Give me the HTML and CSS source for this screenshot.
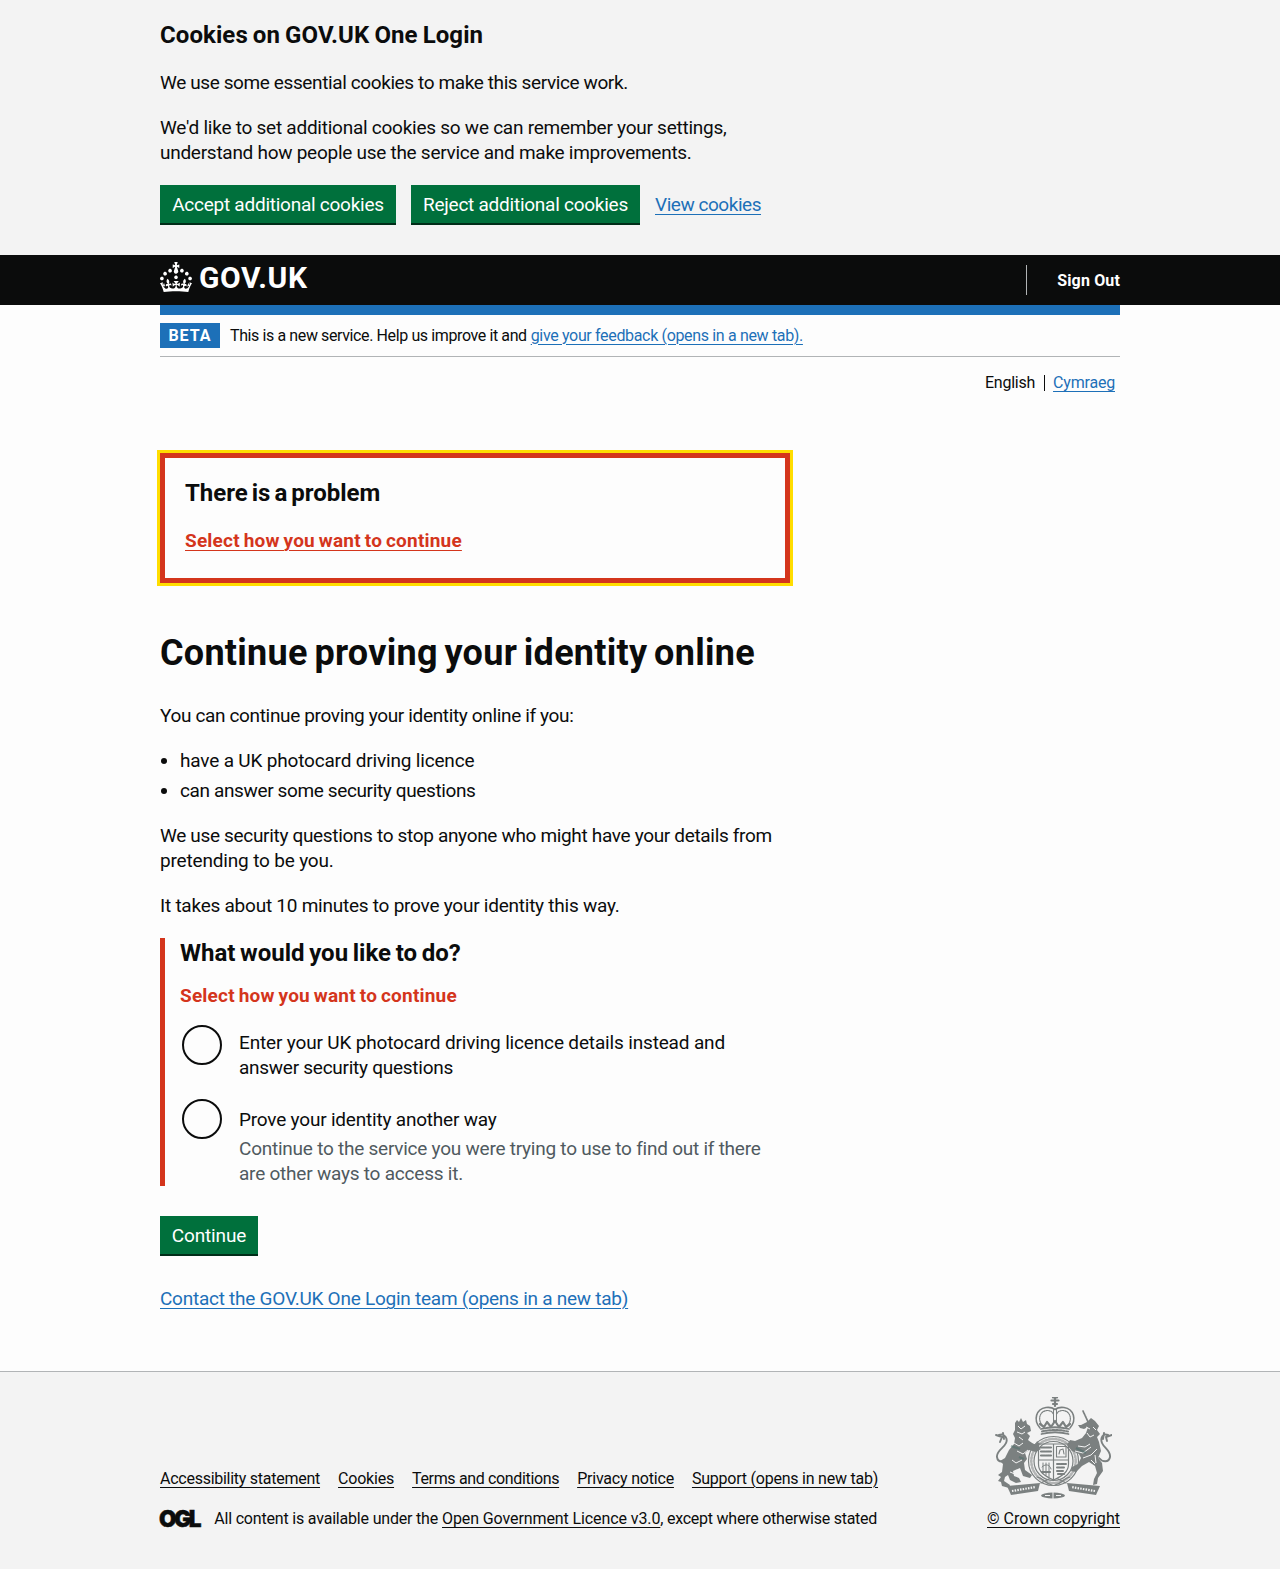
FILE: index.html
```
<!DOCTYPE html>
<html lang="en">
<head>
<meta charset="utf-8">
<title>Continue proving your identity online</title>
<link rel="stylesheet" href="styles.css">
</head>
<body>
<section class="cookies">
  <div class="width">
    <h2 class="h-m"><span class="t-cookies">Cookies on GOV.UK One Login</span></h2>
    <p class="body"><span class="t-essential">We use some essential cookies to make this service work.</span></p>
    <p class="body"><span class="t-like1">We'd like to set additional cookies so we can remember your settings,</span><br><span class="t-like2">understand how people use the service and make improvements.</span></p>
    <div class="cookie-actions">
      <button class="button accept"><span class="t-accept">Accept additional cookies</span></button>
      <button class="button reject"><span class="t-reject">Reject additional cookies</span></button>
      <a class="link" href="#"><span class="t-view">View cookies</span></a>
    </div>
  </div>
</section>
<header class="header">
  <div class="width header-row">
    <a class="logo" href="#">
      <svg class="crown" viewBox="0 0 32 30" width="32" height="30" aria-hidden="true"><path fill="#fff" d="M22.6 10.4c-1 .4-2-.1-2.4-1-.4-.9.1-2 1-2.4.9-.4 2 .1 2.4 1s-.1 2-1 2.4m-5.9 6.7c-.9.4-2-.1-2.4-1-.4-.9.1-2 1-2.4.9-.4 2 .1 2.4 1s-.1 2-1 2.4m10.8-3.7c-1 .4-2-.1-2.4-1-.4-.9.1-2 1-2.4.9-.4 2 .1 2.4 1s0 2-1 2.4m3.3 4.8c-1 .4-2-.1-2.4-1-.4-.9.1-2 1-2.4.9-.4 2 .1 2.4 1s-.1 2-1 2.4M17 4.7l2.3 1.2V2.5l-2.3.7-.2-.2.9-3h-3.4l.9 3-.2.2c-.1.1-2.3-.7-2.3-.7v3.4L15 4.7c.1.1.1.2.2.2l-1.3 4c-.1.2-.1.4-.1.6 0 1.1.8 2 1.9 2.2h.7c1-.2 1.9-1.1 1.9-2.1 0-.2 0-.4-.1-.6l-1.3-4c-.1-.2 0-.2.1-.3m-7.6 5.7c.9.4 2-.1 2.4-1 .4-.9-.1-2-1-2.4-.9-.4-2 .1-2.4 1s0 2 1 2.4m-5 3c.9.4 2-.1 2.4-1 .4-.9-.1-2-1-2.4-.9-.4-2 .1-2.4 1s.1 2 1 2.4m-3.2 4.8c.9.4 2-.1 2.4-1 .4-.9-.1-2-1-2.4-.9-.4-2 .1-2.4 1s0 2 1 2.4m14.8 11c4.4 0 8.6.3 12.3.8 1.1-4.5 2.4-7 3.7-8.8l-2.5-.9c.2 1.3.3 1.9 0 2.7-.4-.4-.8-1.1-1.1-2.3l-1.2 4c.7-.5 1.3-.8 2-.9-1.1 2.5-2.6 3.1-3.5 3-1.1-.2-1.7-1.2-1.5-2.1.3-1.2 1.5-1.5 2.1-.1 1.1-2.3-.8-3-2-2.3 1.9-1.9 2.1-3.5.6-5.6-2.1 1.6-2.1 3.2-1.2 5.5-1.2-1.4-3.2-.6-2.5 1.6.9-1.4 2.1-.5 1.9.8-.2 1.1-1.7 2.1-3.5 1.9-2.7-.2-2.9-2.1-2.9-3.6.7-.1 1.9.5 2.9 1.9l.4-4.3c-1.1 1.1-2.1 1.4-3.2 1.4.4-1.2 2.1-3 2.1-3h-5.4s1.7 1.9 2.1 3c-1.1 0-2.1-.2-3.2-1.4l.4 4.3c1-1.4 2.2-2 2.9-1.9-.1 1.5-.2 3.4-2.9 3.6-1.9.2-3.4-.8-3.5-1.9-.2-1.3 1-2.2 1.9-.8.7-2.3-1.2-3-2.5-1.6.9-2.2.9-3.9-1.2-5.5-1.5 2-1.3 3.7.6 5.6-1.2-.7-3.1 0-2 2.3.6-1.4 1.8-1.1 2.1.1.2.9-.3 1.9-1.5 2.1-.9.2-2.4-.5-3.5-3 .6 0 1.2.3 2 .9l-1.2-4c-.3 1.1-.7 1.9-1.1 2.3-.3-.8-.2-1.4 0-2.7l-2.9.9C1.3 23 2.6 25.5 3.7 30c3.7-.5 7.9-.8 12.3-.8"/></svg>
      <span class="logo-text">GOV.UK</span>
    </a>
    <nav class="account"><a class="signout" href="#"><span class="t-sign">Sign Out</span></a></nav>
  </div>
</header>
<div class="width">
  <div class="bar"></div>
  <div class="phase">
    <strong class="tag">BETA</strong>
    <span class="small"><span class="t-new">This is a new service. Help us improve it and</span> <a class="link" href="#"><span class="t-feedback">give your feedback (opens in a new tab).</span></a></span>
  </div>
  <nav class="languages small">
    <span class="lang-current"><span class="t-english">English</span></span>
    <a class="link" href="#"><span class="t-cymraeg">Cymraeg</span></a>
  </nav>
  <main class="main">
    <section class="error-summary">
      <h2 class="h-m"><span class="t-problem">There is a problem</span></h2>
      <a class="error-link" href="#"><span class="t-select">Select how you want to continue</span></a>
    </section>
    <h1 class="h-l"><span class="t-title">Continue proving your identity online</span></h1>
    <p class="body"><span class="t-can">You can continue proving your identity online if you:</span></p>
    <ul class="list">
      <li><span class="t-have">have a UK photocard driving licence</span></li>
      <li><span class="t-answer">can answer some security questions</span></li>
    </ul>
    <p class="body"><span class="t-stop1">We use security questions to stop anyone who might have your details from</span><br><span class="t-stop2">pretending to be you.</span></p>
    <p class="body"><span class="t-takes">It takes about 10 minutes to prove your identity this way.</span></p>
    <form class="question">
      <h2 class="h-m"><span class="t-what">What would you like to do?</span></h2>
      <p class="error-message"><span class="t-select">Select how you want to continue</span></p>
      <label class="radio radio-first">
        <span class="circle"></span>
        <span class="radio-text"><span class="t-enter1">Enter your UK photocard driving licence details instead and</span><br><span class="t-enter2">answer security questions</span></span>
      </label>
      <label class="radio radio-second">
        <span class="circle"></span>
        <span class="radio-text"><span class="t-prove">Prove your identity another way</span>
          <span class="hint"><span class="t-hint1">Continue to the service you were trying to use to find out if there</span><br><span class="t-hint2">are other ways to access it.</span></span>
        </span>
      </label>
    </form>
    <button class="button continue"><span class="t-continue">Continue</span></button>
    <p class="body contact"><a class="link" href="#"><span class="t-contact">Contact the GOV.UK One Login team (opens in a new tab)</span></a></p>
  </main>
</div>
<footer class="footer">
  <div class="width footer-row">
    <div class="footer-main">
      <nav class="footer-links">
        <a href="#"><span class="t-f1">Accessibility statement</span></a>
        <a href="#"><span class="t-f2">Cookies</span></a>
        <a href="#"><span class="t-f3">Terms and conditions</span></a>
        <a href="#"><span class="t-f4">Privacy notice</span></a>
        <a href="#"><span class="t-f5">Support (opens in new tab)</span></a>
      </nav>
      <div class="licence">
        <span class="ogl">OGL</span>
        <span><span class="t-l1">All content is available under the</span> <a href="#"><span class="t-l2">Open Government Licence v3.0</span></a><span class="t-l3">, except where otherwise stated</span></span>
      </div>
    </div>
    <div class="copyright">
      <svg class="arms" viewBox="0 0 117 102" width="117" height="102" aria-hidden="true">
        <g fill="none" stroke="#7b8080" stroke-width="1.2" stroke-linecap="round" stroke-linejoin="round">
          <!-- crown -->
          <path d="M60 0v9M56.500 3.500h7M58 0.500h4M58 7h4" stroke-width="2.200"/>
          <path d="M45 31C38 23 41 12 51 10.500c4-.6 7 .5 9 2 2-1.500 5-2.600 9-2C79 12 82 23 75 31" stroke-width="1.600"/>
          <path d="M47.500 29C42 22 45 14 52 13.500c3 0 5 1 6 3M72.500 29C78 22 75 14 68 13.500c-3 0-5 1-6 3" stroke-dasharray="1.400 1"/>
          <path d="M58.500 12v15M61.500 12v15" stroke-width="1"/>
          <path d="M45 27l4 3 3-5 4 5 4-6 4 6 4-5 3 5 4-3" stroke-width="2.200"/>
          <path d="M46 32q14-3.500 28 0M46.500 37q13.500-3.500 27 0" stroke-width="1.800"/>
          <path d="M47 34.500q13-3 26 0" stroke-width="2" stroke-dasharray="2 1.500"/>
          <!-- garter and shield -->
          <ellipse cx="58.500" cy="64" rx="25" ry="24.500"/>
          <ellipse cx="58.500" cy="64" rx="22.200" ry="22" stroke-width="2.600" stroke-dasharray="1.400 2" opacity=".55"/>
          <ellipse cx="58.500" cy="64" rx="19.500" ry="19.500"/>
          <path d="M43.500 47h30v20c0 8-6 12-15 16-9-4-15-8-15-16zM58.500 47v36M43.500 63h30"/>
          <path d="M46 50.500h10M46 54.500h10M46 58.500h10M63 77h6M47 75h8" stroke-width="2.200" stroke-dasharray="4 1 2 .7"/>
          <path d="M61.500 49.500h9.500v10.500h-9.500zM64 57l1-4 3-1 1 5" stroke-width="1.100"/>
          <path d="M48 66v10M51 66v12M54 66v14M47 70c4-4 8-2 9 2" stroke-width="1"/>
          <path d="M62 67h9M62 70.500h8M62 74h6" stroke-width="2" stroke-dasharray="3 1"/>
          <path d="M42 80c7 1 8 7 15 8M75 80c-7 1-8 7-15 8M46 86l8-4M63 82l8 4"/>
          <!-- tails -->
          <path d="M4 38c6-2 9 4 7 8-2 5-10 8-9 14 1 7 9 5 13 0M1 38l6 2-2 5M8 36l1 6" stroke-width="1.900"/>
          <path d="M113 38c-5-2-8 3-6 8s9 8 8 14c-1 6-8 5-11 1M117 38l-6 2 1 4M109 36l-1 6" stroke-width="1.900"/>
          <!-- horn -->
          <path d="M88 14l6 13" stroke-width="1.700" stroke-dasharray="2 .7"/>
        </g>
        <g fill="#7b8080">
          <!-- lion -->
          <path d="M20 26l2-3 2 2 2-4 2 4 3-2 1 4 3 2 1 5-4 2 3 3-2 4c3 2 6 5 8 4l1-3 3 3-2 3 3 2-5 3-7-2-4 3 2 6-3 4 1 7 7 5-2 3-7-2-3-8-7 3 1 5 5 2 2 4-5 1-6-3-2-5-3 2-1 4 6 4-1 3-7-2-1-4-3-1 3-4-3-2 4-3 1-8-3-3 5-3 4-8 5-6 1-6-2-4 2-4z"/>
          <!-- unicorn -->
          <path d="M86 28l6-3 4-4 4 3 4 5-2 4 3 4-3 3 2 5 2 9-3 7 4 5 1 8-5 7-1 6-4 1 1-6 3-6-2-7-6-4-7 4-6 6-5-1 1-4 6-3 3-6-2-4-7-3-5-6 3-5 5 1 7-3 4-5 2-6-4 2-4-1-2-3z"/>
          <ellipse cx="58" cy="98.500" rx="12" ry="3"/>
          <path d="M12 89l33-3-2 8-27 4z"/>
          <path d="M105 89l-33-3 2 8 27 4z"/>
        </g>
        <g fill="none" stroke="#f3f3f3" stroke-width="1">
          <path d="M17 94l24-4M100 94l-24-4" stroke-width="2.200" stroke-dasharray="1.500 1.200"/>
          <path d="M23 29l3 3 4-3M22 35l5 2 3-2M24 40l4 3M19 46l5 3 4-3M22 54l6 3 5-4M17 63l4 3 6-3M31 67l2 5M15 75l5 2"/>
          <path d="M91 30l4 2M92 36l3 4 4-2M98 30l3 3M83 49l7 1 5-3M80 54l8 2 8-6M88 61l8-3 6-6M100 58l1 8M96 63l4 4"/>
          <path d="M50 98.500h5M61 98.500h5M58 95v7"/>
        </g>
        <path d="M16 49l9 3M81 51l10 5M24 60l5 2" stroke="#496e69" stroke-width="2" fill="none" opacity=".5"/>
      </svg>
      <a href="#"><span class="t-crown">© Crown copyright</span></a>
    </div>
  </div>
</footer>
</body>
</html>
```
FILE: styles.css
```
* { box-sizing: border-box; }
body { margin: 0; background: #fdfdfd; color: #0b0c0c; font-family: Roboto, "Liberation Sans", sans-serif; font-size: 19px; line-height: 25px; }
h1, h2, p, ul { margin: 0; padding: 0; }
span { white-space: nowrap; }
.width { width: 960px; margin: 0 auto; }
.h-m { font-size: 24px; line-height: 30px; font-weight: 700; }
.h-l { font-size: 36px; line-height: 40px; font-weight: 700; }
.small { font-size: 16px; line-height: 20px; }
.link { color: #1d70b8; text-decoration: underline; text-decoration-thickness: 1px; text-underline-offset: 3px; }
.cookies { background: #f3f3f3; height: 255px; padding-top: 20px; }
.cookies .h-m { margin-bottom: 20px; }
.cookies .body { margin-bottom: 20px; }
.cookie-actions { display: flex; align-items: center; gap: 15px; }
.button { font: inherit; color: #fff; background: #00703c; border: 0; box-shadow: 0 2px 0 #002d18; height: 38px; padding: 0; text-align: center; display: block; }
.accept { width: 236px; }
.reject { width: 229px; }
.header { background: #0b0c0c; height: 50px; color: #fff; }
.header-row { display: flex; justify-content: space-between; height: 50px; align-items: center; }
.logo { display: flex; align-items: center; gap: 7px; color: #fff; text-decoration: none; padding-bottom: 6px; }
.logo-text { font-size: 30px; line-height: 30px; font-weight: 700; letter-spacing: 0.65px; padding-top: 2px; }
.account { border-left: 1px solid #b1b4b6; height: 30px; padding-left: 30px; display: flex; align-items: center; }
.signout { color: #fff; font-size: 16px; font-weight: 700; text-decoration: none; }
.bar { height: 10px; background: #1d70b8; }
.phase { display: flex; align-items: center; gap: 10px; height: 42px; border-bottom: 1px solid #b1b4b6; }
.tag { background: #1d70b8; color: #fff; font-size: 16px; line-height: 25px; width: 60px; text-align: center; letter-spacing: 1px; }
.languages { display: flex; justify-content: flex-end; padding: 16px 5px 0 0; height: 96px; align-items: flex-start; gap: 8px; }
.lang-current { border-right: 1px solid #0b0c0c; line-height: 16px; margin-top: 2px; padding-right: 9px; }
.main { width: 630px; }
.error-summary { height: 130px; border: 5px solid #d4351c; box-shadow: 0 0 0 3px #fd0; padding: 20px; }
.error-summary .h-m { margin-bottom: 20px; }
.error-link { color: #d4351c; font-weight: 700; text-decoration: underline; text-decoration-thickness: 1px; text-underline-offset: 3px; }
.h-l { margin: 50px 0 30px; }
.main .body { margin-bottom: 20px; }
.list { list-style: disc; padding-left: 20px; margin-bottom: 20px; }
.list li + li { margin-top: 5px; }
.question { border-left: 5px solid #d4351c; padding-left: 15px; height: 248px; }
.error-message { color: #d4351c; font-weight: 700; margin: 15px 0 17px; }
.radio { display: flex; gap: 17px; padding-left: 2px; }
.circle { width: 40px; height: 40px; border: 2px solid #0b0c0c; border-radius: 50%; flex: none; }
.radio-text { padding-top: 5px; }
.radio-first { margin-bottom: 19px; }
.radio-second .radio-text { padding-top: 8px; }
.hint { display: block; color: #505a5f; margin-top: 4px; }
.continue { width: 98px; margin: 30px 0 32px; }
.contact { height: 25px; }
.footer { margin-top: 60px; background: #f3f3f3; border-top: 1px solid #b1b4b6; height: 198px; font-size: 16px; line-height: 20px; }
.footer a { color: #0b0c0c; text-decoration: underline; text-decoration-thickness: 1px; text-underline-offset: 3px; }
.footer-row { display: flex; justify-content: space-between; padding-top: 25px; }
.footer-links { display: flex; gap: 18px; margin-top: 72px; }
.licence { display: flex; gap: 15px; margin-top: 20px; }
.ogl { font-family: Inter, sans-serif; font-weight: 900; font-size: 22.5px; letter-spacing: -2.3px; margin-left: -1px; -webkit-text-stroke: 0.5px #0b0c0c; }
.copyright { display: flex; flex-direction: column; align-items: center; gap: 10px; }
.arms { display: block; }

/* Per-phrase tracking */
.t-cookies { word-spacing: -1px; letter-spacing: 0.08px; }
.t-essential { letter-spacing: -0.39px; }
.t-like1 { letter-spacing: -0.25px; }
.t-like2 { letter-spacing: -0.27px; }
.t-accept, .t-reject { letter-spacing: -0.25px; }
.t-view { letter-spacing: -0.46px; }
.t-sign { letter-spacing: 0.15px; }
.t-new { letter-spacing: -0.39px; }
.t-feedback { letter-spacing: -0.34px; }
.t-english { letter-spacing: -0.25px; }
.t-cymraeg { letter-spacing: -0.19px; }
.t-problem { word-spacing: -2px; }
.t-select { word-spacing: -1px; letter-spacing: 0.2px; }
.t-title { word-spacing: -2.5px; letter-spacing: 0.27px; }
.t-can { letter-spacing: -0.35px; }
.t-have { letter-spacing: -0.18px; }
.t-answer { letter-spacing: -0.37px; }
.t-stop1 { letter-spacing: -0.33px; }
.t-stop2 { letter-spacing: -0.17px; }
.t-takes { letter-spacing: -0.24px; }
.t-what { word-spacing: -1.3px; }
.t-enter1 { letter-spacing: -0.16px; }
.t-enter2 { letter-spacing: -0.26px; }
.t-prove { letter-spacing: -0.2px; }
.t-hint1 { letter-spacing: -0.24px; }
.t-hint2 { letter-spacing: -0.22px; }
.t-continue { letter-spacing: -0.15px; }
.t-contact { letter-spacing: -0.25px; }
.t-f1 { letter-spacing: -0.26px; }
.t-f2 { letter-spacing: -0.2px; }
.t-f3 { letter-spacing: -0.35px; }
.t-f4 { letter-spacing: -0.2px; }
.t-f5 { letter-spacing: -0.23px; }
.t-l1 { letter-spacing: -0.19px; }
.t-l2 { letter-spacing: -0.1px; }
.t-l3 { letter-spacing: -0.24px; }
.t-crown { letter-spacing: 0.03px; }
```
